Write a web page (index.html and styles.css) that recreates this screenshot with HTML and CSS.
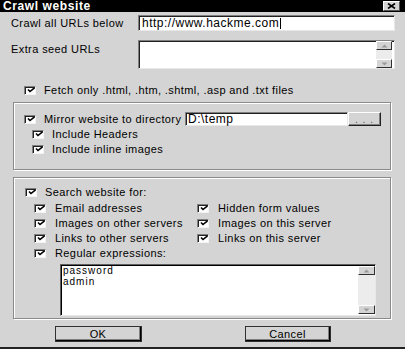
FILE: index.html
```html
<!DOCTYPE html>
<html>
<head>
<meta charset="utf-8">
<link rel="stylesheet" href="styles.css">
</head>
<body>
<div class="dialog">
  <div class="title">
    <span>Crawl website</span>
    <span class="close"><svg width="9" height="6" viewBox="0 0 9 6"><path d="M1 0.5L8 5.5M8 0.5L1 5.5" stroke="#000" stroke-width="1.6"/></svg></span>
  </div>

  <div class="row row1">
    <span class="label">Crawl all URLs below</span>
    <div class="field url">http://www.hackme.com<span class="caret"></span></div>
  </div>

  <div class="row row2">
    <span class="label label-top">Extra seed URLs</span>
    <div class="field area seeds">
      <div class="scroll">
        <span class="sbtn"><svg width="7" height="4" viewBox="0 0 7 4"><path d="M0.5 3.5L3.5 0.5L6.5 3.5Z" fill="#9a9a9a"/></svg></span>
        <span class="sbtn"><svg width="7" height="4" viewBox="0 0 7 4"><path d="M0.5 0.5L3.5 3.5L6.5 0.5Z" fill="#9a9a9a"/></svg></span>
      </div>
    </div>
  </div>

  <div class="check fetch"><span class="box"></span><span>Fetch only .html, .htm, .shtml, .asp and .txt files</span></div>

  <div class="group group1">
    <div class="mirror">
      <div class="check"><span class="box"></span><span>Mirror website to directory</span></div>
      <div class="field dir">D:\temp</div>
      <div class="btn dots">. . .</div>
    </div>
    <div class="check sub"><span class="box"></span><span>Include Headers</span></div>
    <div class="check sub"><span class="box"></span><span>Include inline images</span></div>
  </div>

  <div class="group group2">
    <div class="check search"><span class="box"></span><span>Search website for:</span></div>
    <div class="opts">
      <div class="check"><span class="box"></span><span>Email addresses</span></div>
      <div class="check"><span class="box"></span><span>Hidden form values</span></div>
      <div class="check"><span class="box"></span><span>Images on other servers</span></div>
      <div class="check"><span class="box"></span><span>Images on this server</span></div>
      <div class="check"><span class="box"></span><span>Links to other servers</span></div>
      <div class="check"><span class="box"></span><span>Links on this server</span></div>
      <div class="check"><span class="box"></span><span>Regular expressions:</span></div>
    </div>
    <div class="field area regex">
      <div class="lines"><div>password</div><div>admin</div></div>
      <div class="scroll">
        <span class="sbtn"><svg width="7" height="4" viewBox="0 0 7 4"><path d="M0.5 3.5L3.5 0.5L6.5 3.5Z" fill="#9a9a9a"/></svg></span>
        <span class="sbtn"><svg width="7" height="4" viewBox="0 0 7 4"><path d="M0.5 0.5L3.5 3.5L6.5 0.5Z" fill="#9a9a9a"/></svg></span>
      </div>
    </div>
  </div>

  <div class="buttons">
    <div class="btn push ok">OK</div>
    <div class="btn push cancel">Cancel</div>
  </div>
</div>
</body>
</html>
```

FILE: styles.css
```css
* { box-sizing: border-box; }
html, body { margin: 0; padding: 0; }
body {
  width: 405px;
  height: 349px;
  overflow: hidden;
  background: #d4d4d4;
  font-family: "Liberation Sans", Arial, sans-serif;
  font-size: 11px;
  letter-spacing: 0.4px;
  color: #000;
}
.dialog {
  width: 405px;
  height: 349px;
  border-bottom: 2px solid #222;
  display: flex;
  flex-direction: column;
}
.title {
  height: 12px;
  background: #000;
  color: #fff;
  font-weight: bold;
  font-size: 12px;
  line-height: 12px;
  padding-left: 3px;
  display: flex;
  justify-content: space-between;
  align-items: center;
  letter-spacing: 0.6px;
}
.close {
  width: 17px;
  height: 10px;
  margin-right: 5px;
  background: #d4d4d4;
  border-top: 1px solid #fff;
  border-left: 1px solid #fff;
  border-right: 1px solid #555;
  border-bottom: 1px solid #555;
  display: flex;
  align-items: center;
  justify-content: center;
}
.row { display: flex; padding-left: 11px; }
.label { width: 127px; line-height: 13px; }
.row1 { margin-top: 3px; align-items: center; }
.row2 { margin-top: 9px; align-items: flex-start; }
.label-top { padding-top: 3px; }

.field {
  background: #fff;
  border-top: 1px solid #808080;
  border-left: 1px solid #808080;
  border-right: 1px solid #e8e8e8;
  border-bottom: 1px solid #e8e8e8;
  box-shadow: inset 1px 1px 0 #202020;
  font-size: 12px;
  letter-spacing: 0.5px;
}
.url {
  width: 257px;
  height: 16px;
  padding-left: 3px;
  line-height: 14px;
  display: flex;
  align-items: center;
}
.caret {
  display: inline-block;
  width: 1px;
  height: 11px;
  background: #000;
  margin-left: 1px;
}
.area { position: relative; }
.seeds { width: 257px; height: 29px; }
.scroll {
  position: absolute;
  top: 0;
  bottom: 0;
  right: 2px;
  width: 16px;
  background: #ececec;
  display: flex;
  flex-direction: column;
  justify-content: space-between;
}
.sbtn {
  height: 9px;
  background: #d4d4d4;
  border-top: 1px solid #fff;
  border-left: 1px solid #fff;
  border-right: 1px solid #303030;
  border-bottom: 1px solid #303030;
  display: flex;
  align-items: center;
  justify-content: center;
}

.check {
  display: flex;
  align-items: center;
  height: 13px;
  line-height: 13px;
  white-space: nowrap;
}
.box {
  width: 12px;
  height: 9px;
  flex: none;
  margin-right: 8px;
  background: #fff url("data:image/svg+xml,%3Csvg xmlns='http://www.w3.org/2000/svg' width='10' height='7' viewBox='0 0 10 7'%3E%3Cpath d='M2 2.5L4 4.5L8.5 0.8' fill='none' stroke='%23000' stroke-width='1.6'/%3E%3C/svg%3E") no-repeat 1px 0;
  border-top: 1px solid #808080;
  border-left: 1px solid #808080;
  border-right: 1px solid #f4f4f4;
  border-bottom: 1px solid #f4f4f4;
  box-shadow: inset 1px 1px 0 #202020;
}
.fetch { margin-top: 15px; padding-left: 24px; }

.group {
  margin-left: 13px;
  width: 378px;
  border: 1px solid #8a8a8a;
  box-shadow: inset 1px 1px 0 #fff, 1px 1px 0 #fff;
}
.group1 { margin-top: 5px; height: 68px; padding: 9px 0 0 10px; }
.mirror { display: flex; align-items: center; height: 14px; }
.mirror .check { width: 161px; }
.dir {
  width: 163px;
  height: 14px;
  padding-left: 2px;
  line-height: 12px;
}
.btn {
  background: #d4d4d4;
  border-top: 1px solid #fff;
  border-left: 1px solid #fff;
  border-right: 1px solid #202020;
  border-bottom: 1px solid #202020;
  box-shadow: inset -1px -1px 0 #808080;
  display: flex;
  align-items: center;
  justify-content: center;
}
.dots { width: 33px; height: 14px; letter-spacing: 1px; color: #555; font-size: 10px; }
.sub { padding-left: 8px; margin-top: 2px; }

.group2 { margin-top: 7px; height: 142px; padding: 8px 0 0 11px; }
.opts {
  display: grid;
  grid-template-columns: 163px auto;
  row-gap: 2px;
  margin-top: 3px;
  padding-left: 9px;
}
.opts .box { margin-right: 9px; }
.regex {
  margin-left: 35px;
  margin-top: 4px;
  width: 316px;
  height: 52px;
  border-top: 1px solid #606060;
  border-left: 1px solid #606060;
  box-shadow: inset 1px 1px 0 #000;
}
.regex .scroll { right: 0; top: 1px; bottom: 1px; width: 17px; }
.lines { padding: 0 0 0 2px; line-height: 11px; font-size: 10px; letter-spacing: 1px; }

.buttons { display: flex; padding-left: 55px; margin-top: 7px; }
.push {
  height: 16px;
  border-top: 1px solid #fff;
  border-left: 1px solid #fff;
  border-right: 2px solid #000;
  border-bottom: 2px solid #000;
  outline: 1px solid #303030;
  outline-offset: -1px;
}
.ok { width: 87px; }
.cancel { width: 86px; margin-left: 103px; }
```
